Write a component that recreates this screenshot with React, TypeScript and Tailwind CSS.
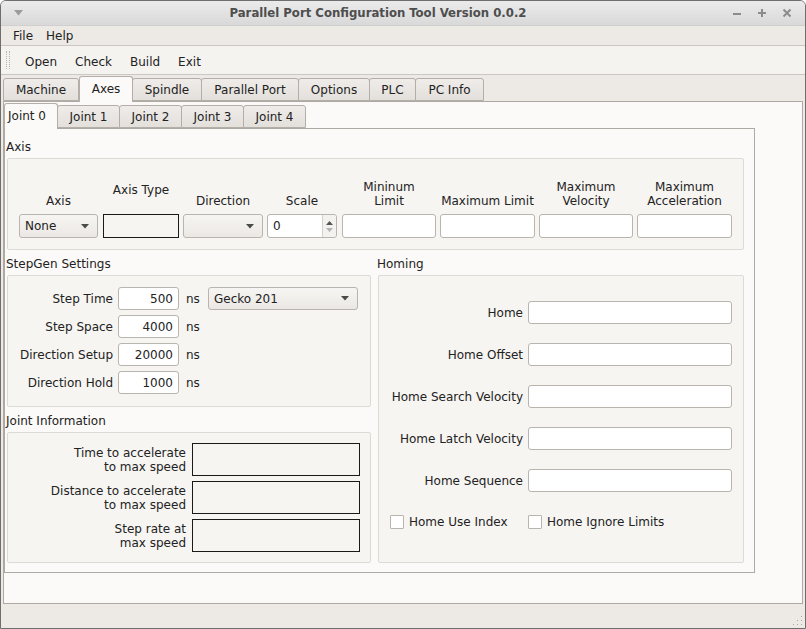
import React from "react";

const Combo = ({ text, w, h = "h-[24px]" }: { text: string; w: string; h?: string }) => (
  <div
    className={`${w} ${h} flex items-center justify-between pl-[5px] pr-[8px] rounded-[3px] border border-[#b9b4ae] bg-linear-to-b from-[#f7f5f3] to-[#ebe8e4]`}
  >
    <span>{text}</span>
    <svg width="8" height="5" viewBox="0 0 8 5">
      <path d="M0 0 L8 0 L4 4.5 Z" fill="#4a4a4a" />
    </svg>
  </div>
);

const LineEdit = ({ w, h = "h-[23px]", value = "", right = false }: { w: string; h?: string; value?: string; right?: boolean }) => (
  <div
    className={`${w} ${h} flex items-center px-[5px] rounded-[3px] border border-[#b9b4ae] bg-white ${right ? "justify-end" : ""}`}
  >
    {value}
  </div>
);

const Tab = ({ label, w, active, h }: { label: string; w: string; active?: boolean; h: string }) =>
  active ? (
    <div
      className={`${w} h-[26px] -mb-[1px] flex items-center justify-center pb-[2px] border border-b-0 border-[#b3aea8] rounded-t-[3px] bg-[#fcfaf8] z-10`}
    >
      {label}
    </div>
  ) : (
    <div
      className={`${w} ${h} -ml-[1px] flex items-center justify-center border border-[#b3aea8] rounded-t-[3px] bg-linear-to-b from-[#efece9] to-[#e3e0dc]`}
    >
      {label}
    </div>
  );

const GroupLabel = ({ text }: { text: string }) => <div className="h-[16px] leading-[16px] -ml-[1px] mb-[3px]">{text}</div>;

const App = () => {
  const stepRows = [
    ["Step Time", "500"],
    ["Step Space", "4000"],
    ["Direction Setup", "20000"],
    ["Direction Hold", "1000"],
  ];
  const homeRows = ["Home", "Home Offset", "Home Search Velocity", "Home Latch Velocity", "Home Sequence"];
  const infoRows = [
    ["Time to accelerate", "to max speed"],
    ["Distance to accelerate", "to max speed"],
    ["Step rate at", "max speed"],
  ];

  return (
    <div className="w-[806px] h-[629px] flex flex-col overflow-hidden border border-[#6e6e6e] rounded-t-[6px] bg-[#edeae6] font-['DejaVu_Sans'] text-[12px] text-[#222]">
      {/* title bar */}
      <div className="h-[25px] flex items-center bg-linear-to-b from-[#ebebeb] to-[#d9d9d9] border-b border-[#cfcfcf]">
        <svg className="ml-[13px]" width="9" height="6" viewBox="0 0 9 6">
          <path d="M0 0 L9 0 L4.5 5.5 Z" fill="#9c9c9c" />
        </svg>
        <div className="flex-1 text-center font-['DejaVu_Sans_Condensed'] font-bold text-[13px] text-[#4e4e4e] pl-[1px]">
          Parallel Port Configuration Tool Version 0.0.2
        </div>
        <div className="flex items-center gap-[15px] mr-[13px]">
          <svg width="10" height="10" viewBox="0 0 10 10">
            <path d="M1 6 H9" stroke="#8c8c8c" strokeWidth="2" />
          </svg>
          <svg width="10" height="10" viewBox="0 0 10 10">
            <path d="M1 5 H9 M5 1 V9" stroke="#8c8c8c" strokeWidth="2" />
          </svg>
          <svg width="10" height="10" viewBox="0 0 10 10">
            <path d="M1.5 1.5 L8.5 8.5 M8.5 1.5 L1.5 8.5" stroke="#8c8c8c" strokeWidth="2" />
          </svg>
        </div>
      </div>

      {/* menu bar */}
      <div className="h-[19px] flex items-center pl-[5px]">
        <span className="px-[7px]">File</span>
        <span className="px-[6px]">Help</span>
      </div>

      {/* toolbar */}
      <div className="h-[30px] flex items-center pt-[3px] border-y border-[#cbc7c2] bg-[#f5f3f0]">
        <div className="ml-[5px] -mt-[3px] w-[4px] h-[18px] border-x border-dotted border-[#b5b1ac]" />
        <div className="flex ml-[6px]">
          {["Open", "Check", "Build", "Exit"].map((b) => (
            <span key={b} className="px-[9px]">
              {b}
            </span>
          ))}
        </div>
      </div>

      {/* main tab widget */}
      <div className="px-[2px] flex flex-col">
        <div className="h-[26px] flex items-end pl-[1px]">
          <Tab label="Machine" w="w-[76px]" h="h-[23px]" />
          <Tab label="Axes" w="w-[54px]" h="h-[23px]" active />
          <Tab label="Spindle" w="w-[70px]" h="h-[23px]" />
          <Tab label="Parallel Port" w="w-[98px]" h="h-[23px]" />
          <Tab label="Options" w="w-[72px]" h="h-[23px]" />
          <Tab label="PLC" w="w-[47px]" h="h-[23px]" />
          <Tab label="PC Info" w="w-[69px]" h="h-[23px]" />
        </div>

        <div className="h-[503px] border border-[#aea9a3] bg-[#fcfaf8] flex flex-col">
          {/* inner tabs */}
          <div className="h-[26px] flex items-end">
            <div className="w-[54px] h-[26px] -mb-[1px] flex items-center pl-[3px] pb-[2px] border border-b-0 border-[#b3aea8] rounded-t-[3px] bg-[#fcfaf8] z-10">
              Joint 0
            </div>
            {["Joint 1", "Joint 2", "Joint 3", "Joint 4"].map((j) => (
              <Tab key={j} label={j} w="w-[63px]" h="h-[23px]" />
            ))}
          </div>

          <div className="w-[751px] h-[445px] border border-[#aea9a3] pl-[2px] pt-[10px]">
            {/* Axis group */}
            <GroupLabel text="Axis" />
            <div className="w-[737px] h-[92px] flex items-end gap-[4px] pl-[11px] pb-[11px] border border-[#ddd9d4] rounded-[2px] bg-[#f7f5f2]">
              <div className="flex flex-col items-center mr-[1px]">
                <div className="leading-[14px] mb-[6px]">Axis</div>
                <Combo text="None" w="w-[79px]" />
              </div>
              <div className="flex flex-col items-center">
                <div className="leading-[14px] mb-[17px]">Axis Type</div>
                <div className="w-[76px] h-[24px] border border-[#1a1a1a]" />
              </div>
              <div className="flex flex-col items-center">
                <div className="leading-[14px] mb-[6px]">Direction</div>
                <Combo text="" w="w-[80px]" />
              </div>
              <div className="flex flex-col items-center mr-[1px]">
                <div className="leading-[14px] mb-[6px]">Scale</div>
                <div className="w-[70px] h-[24px] flex rounded-[3px] border border-[#b9b4ae] bg-white">
                  <div className="flex-1 flex items-center pl-[5px]">0</div>
                  <div className="w-[14px] flex flex-col items-center justify-center gap-[3px] border-l border-[#d4d0cb] bg-[#f4f2ef] rounded-r-[3px]">
                    <svg width="7" height="4" viewBox="0 0 7 4">
                      <path d="M0 4 L7 4 L3.5 0 Z" fill="#555" />
                    </svg>
                    <svg width="7" height="4" viewBox="0 0 7 4">
                      <path d="M0 0 L7 0 L3.5 4 Z" fill="#b3b3b3" />
                    </svg>
                  </div>
                </div>
              </div>
              <div className="flex flex-col items-center">
                <div className="leading-[14px] mb-[6px] text-center">
                  Mininum
                  <br />
                  Limit
                </div>
                <LineEdit w="w-[94px]" h="h-[24px]" />
              </div>
              <div className="flex flex-col items-center">
                <div className="leading-[14px] mb-[6px]">Maximum Limit</div>
                <LineEdit w="w-[95px]" h="h-[24px]" />
              </div>
              <div className="flex flex-col items-center">
                <div className="leading-[14px] mb-[6px] text-center">
                  Maximum
                  <br />
                  Velocity
                </div>
                <LineEdit w="w-[94px]" h="h-[24px]" />
              </div>
              <div className="flex flex-col items-center">
                <div className="leading-[14px] mb-[6px] text-center">
                  Maximum
                  <br />
                  Acceleration
                </div>
                <LineEdit w="w-[95px]" h="h-[24px]" />
              </div>
            </div>

            <div className="flex gap-[7px] mt-[6px]">
              {/* left column */}
              <div className="flex flex-col">
                <GroupLabel text="StepGen Settings" />
                <div className="w-[364px] h-[132px] flex flex-col gap-[5px] pt-[11px] border border-[#ddd9d4] rounded-[2px] bg-[#f7f5f2]">
                  {stepRows.map(([label, val], i) => (
                    <div key={label} className="h-[23px] flex items-center">
                      <div className="w-[105px] text-right">{label}</div>
                      <div className="ml-[5px]">
                        <LineEdit w="w-[61px]" value={val} right />
                      </div>
                      <div className="ml-[7px] w-[15px]">ns</div>
                      {i === 0 && (
                        <div className="ml-[7px]">
                          <Combo text="Gecko 201" w="w-[150px]" h="h-[23px]" />
                        </div>
                      )}
                    </div>
                  ))}
                </div>

                <div className="mt-[6px]">
                  <GroupLabel text="Joint Information" />
                </div>
                <div className="w-[364px] h-[131px] flex flex-col gap-[5px] pt-[10px] border border-[#ddd9d4] rounded-[2px] bg-[#f7f5f2]">
                  {infoRows.map(([a, b]) => (
                    <div key={a} className="h-[33px] flex items-center">
                      <div className="w-[178px] text-right leading-[14px]">
                        {a}
                        <br />
                        {b}
                      </div>
                      <div className="ml-[6px] w-[168px] h-[33px] border border-[#1a1a1a]" />
                    </div>
                  ))}
                </div>
              </div>

              {/* right column */}
              <div className="flex flex-col">
                <GroupLabel text="Homing" />
                <div className="w-[366px] h-[288px] flex flex-col pt-[25px] border border-[#ddd9d4] rounded-[2px] bg-[#f7f5f2]">
                  <div className="flex flex-col gap-[19px]">
                    {homeRows.map((r) => (
                      <div key={r} className="h-[23px] flex items-center">
                        <div className="w-[144px] text-right">{r}</div>
                        <div className="ml-[5px]">
                          <LineEdit w="w-[204px]" />
                        </div>
                      </div>
                    ))}
                  </div>
                  <div className="flex items-center mt-[22px] pl-[11px] h-[15px]">
                    <div className="w-[14px] h-[14px] border border-[#b9b4ae] bg-white rounded-[1px]" />
                    <span className="ml-[5px] w-[119px]">Home Use Index</span>
                    <div className="w-[14px] h-[14px] border border-[#b9b4ae] bg-white rounded-[1px]" />
                    <span className="ml-[5px]">Home Ignore Limits</span>
                  </div>
                </div>
              </div>
            </div>
          </div>
        </div>
      </div>

      {/* status bar */}
      <div className="flex-1 flex items-end justify-end pr-[2px] pb-[2px]">
        <svg width="11" height="11" viewBox="0 0 11 11">
          {[
            [9, 1],
            [9, 5],
            [5, 5],
            [9, 9],
            [5, 9],
            [1, 9],
          ].map(([x, y], i) => (
            <rect key={i} x={x} y={y} width="1" height="1" fill="#a9a59f" />
          ))}
        </svg>
      </div>
    </div>
  );
};

export default App;
